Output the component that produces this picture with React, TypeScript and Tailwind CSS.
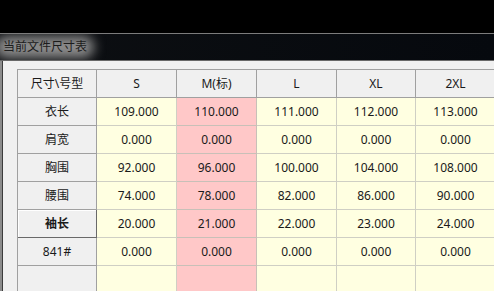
const sizes = ['S', 'M(标)', 'L', 'XL', '2XL'];

const rows: { name: string; values: string[]; active?: boolean }[] = [
  { name: '衣长', values: ['109.000', '110.000', '111.000', '112.000', '113.000'] },
  { name: '肩宽', values: ['0.000', '0.000', '0.000', '0.000', '0.000'] },
  { name: '胸围', values: ['92.000', '96.000', '100.000', '104.000', '108.000'] },
  { name: '腰围', values: ['74.000', '78.000', '82.000', '86.000', '90.000'] },
  { name: '袖长', values: ['20.000', '21.000', '22.000', '23.000', '24.000'], active: true },
  { name: '841#', values: ['0.000', '0.000', '0.000', '0.000', '0.000'] },
  { name: '', values: ['', '', '', '', ''] },
];

const font = { fontFamily: '"Noto Sans", "Noto Sans CJK SC", sans-serif' };

const App = () => {
  return (
    <div className="w-[494px] h-[291px] overflow-hidden bg-black flex flex-col" style={font}>
      {/* Desktop above the window */}
      <div className="h-[33px] shrink-0 bg-black" />
      <div className="h-px shrink-0 bg-[#7c7c7c]" />

      {/* Aero title bar */}
      <div className="h-[26px] shrink-0 flex items-center overflow-hidden bg-gradient-to-r from-[#0d0f12] to-[#06090e]">
        <span className="relative ml-[3px] text-[12px] leading-none text-[#1c1c1c]">
          {/* glow behind the caption */}
          <span className="absolute -left-[8px] -right-[7px] -top-[5px] -bottom-[5px] rounded-[12px] bg-[#8e8e8e] blur-[6px]" />
          <span className="relative">当前文件尺寸表</span>
        </span>
      </div>
      <div className="h-px shrink-0 bg-[#686868]" />

      {/* Window body */}
      <div className="flex-1 flex bg-[#8c8c8c] pl-[2px]">
        <div className="flex-1 border-l border-[#3c3c3c] bg-[#f0f0f0] pt-[8px] pl-[14px]">
          <div className="grid grid-cols-[79px_80px_80px_80px_79px_80px] auto-rows-[28px] border-t border-l border-[#a0a0a0] text-[12px] text-[#1a1a1a]">
            {/* Header row */}
            <div className="flex items-center justify-center bg-[#f0f0f0] border-r border-b border-[#a0a0a0]">
              尺寸\号型
            </div>
            {sizes.map((s) => (
              <div key={s} className="flex items-center justify-center bg-[#f0f0f0] border-r border-b border-[#a0a0a0]">
                {s}
              </div>
            ))}

            {rows.map((row, i) => (
              <div key={i} className="contents">
                <div
                  className={
                    row.active
                      ? 'flex items-center justify-center font-bold bg-[#f0f0f0] border-r border-b border-[#696969] shadow-[inset_1px_1px_0_#ffffff]'
                      : 'flex items-center justify-center bg-[#f0f0f0] border-r border-b border-[#a0a0a0]'
                  }
                >
                  {row.name}
                </div>
                {row.values.map((v, j) => (
                  <div
                    key={j}
                    className={
                      j === 1
                        ? 'flex items-center justify-center bg-[#ffc8c8] border-r border-b border-[#c8c0b8]'
                        : 'flex items-center justify-center bg-[#ffffe1] border-r border-b border-[#cfcfc4]'
                    }
                  >
                    {v}
                  </div>
                ))}
              </div>
            ))}
          </div>
        </div>
      </div>
    </div>
  );
};

export default App;
